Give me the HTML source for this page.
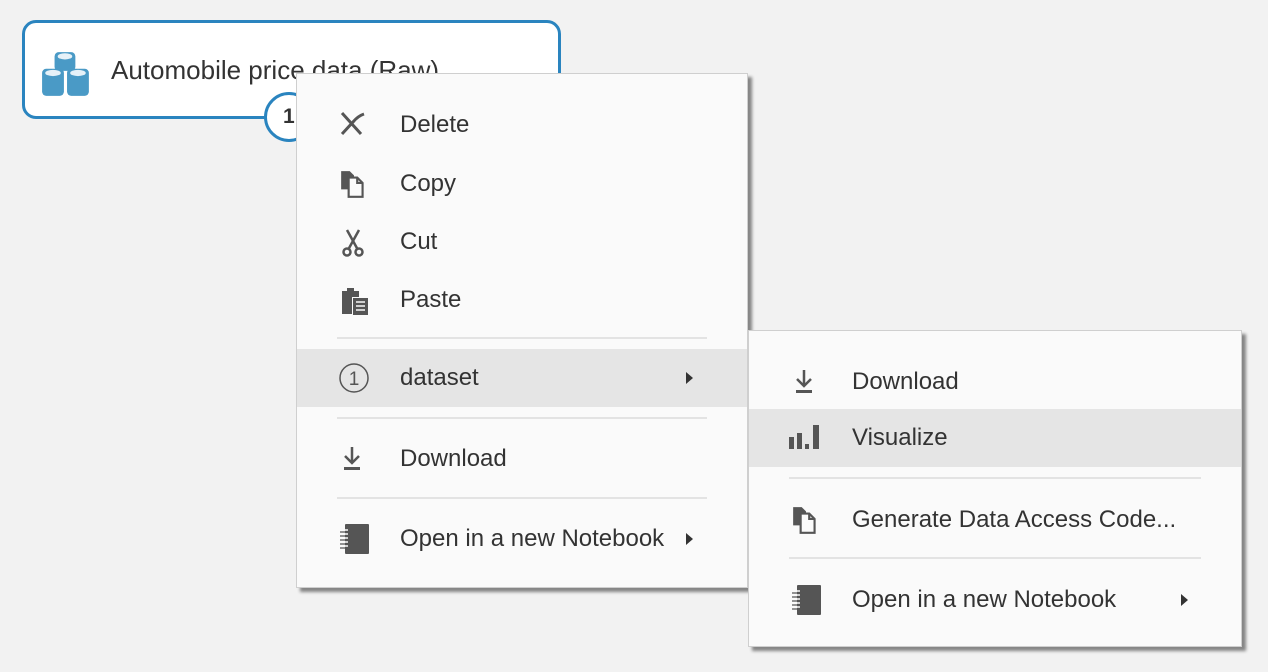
<!DOCTYPE html>
<html><head><style>
body{margin:0;width:1268px;height:672px;background:#f2f2f2;font-family:"Liberation Sans",sans-serif;position:relative;overflow:hidden;color:#333}
.node{position:absolute;left:22px;top:20px;width:533px;height:93px;border:3px solid #2a84bf;border-radius:14px;background:#fff}
.node .t{position:absolute;left:86px;top:32px;font-size:26px;color:#333}
.port{position:absolute;left:264px;top:92px;width:44px;height:44px;border:3px solid #2a84bf;border-radius:50%;background:#fff;font-weight:bold;font-size:21px;line-height:44px;text-indent:16px}
.menu{position:absolute;background:#fafafa;border:1px solid #cfcfcf;box-shadow:4px 4px 3px rgba(0,0,0,.45)}
.it{position:absolute;left:0;right:0;height:58px;font-size:24px;line-height:58px}
.it .tx{position:absolute}
.it svg{position:absolute;top:14px}
.hl{background:#e5e5e5}
.sep{position:absolute;height:2px;background:#e3e3e3}
.arr{position:absolute;width:0;height:0;border-left:7px solid #333;border-top:6px solid transparent;border-bottom:6px solid transparent;top:23px}
</style></head><body>
<div class="node">
<svg style="position:absolute;left:15px;top:24px" width="52" height="54" viewBox="0 0 50 48">
<g fill="#4a9ac6">
<rect x="14" y="3" width="20" height="18" rx="4"/>
<rect x="2" y="19" width="21" height="26" rx="4"/>
<rect x="26" y="19" width="21" height="26" rx="4"/>
</g>
<g fill="#e6f1f8"><ellipse cx="24" cy="7" rx="7" ry="3"/><ellipse cx="12.5" cy="23" rx="7.5" ry="3"/><ellipse cx="36.5" cy="23" rx="7.5" ry="3"/></g>
</svg>
<div class="t">Automobile price data (Raw)</div>
</div>
<div class="port">1</div>

<div class="menu" style="left:296px;top:73px;width:450px;height:513px">
<div class="it" style="top:22px"><svg style="left:42px" width="28" height="28" viewBox="0 0 28 28"><path d="M3 3 L22 24 M3 24 L14 12 Q19 6 25 4" stroke="#555" stroke-width="3" fill="none"/></svg><span class="tx" style="left:103px">Delete</span></div>
<div class="it" style="top:81px"><svg style="left:42px" width="30" height="30" viewBox="0 0 28 28"><path d="M2 2h8l4 4v13H2z" fill="#555"/><path d="M9 8h8l5 5v13H9z" fill="#fafafa" stroke="#555" stroke-width="2"/><path d="M17 8v5h5" fill="none" stroke="#555" stroke-width="2"/></svg><span class="tx" style="left:103px">Copy</span></div>
<div class="it" style="top:139px"><svg style="left:44px" width="28" height="32" viewBox="0 0 28 30"><path d="M6 2 L17 22 M18 2 L7 22" stroke="#555" stroke-width="2.5" fill="none"/><circle cx="6" cy="24" r="3.5" fill="none" stroke="#555" stroke-width="2.5"/><circle cx="18" cy="24" r="3.5" fill="none" stroke="#555" stroke-width="2.5"/></svg><span class="tx" style="left:103px">Cut</span></div>
<div class="it" style="top:197px"><svg style="left:43px" width="30" height="32" viewBox="0 0 30 30"><path d="M2 5h5V2h7v3h5v6H12v17H2z" fill="#555"/><rect x="13" y="12" width="15" height="17" fill="#555"/><path d="M16 16h9M16 20h9M16 24h9" stroke="#fafafa" stroke-width="1.5"/></svg><span class="tx" style="left:103px">Paste</span></div>
<div class="sep" style="left:40px;right:40px;top:263px"></div>
<div class="it hl" style="top:275px"><svg style="left:41px" width="34" height="34" viewBox="0 0 34 34"><circle cx="16" cy="15" r="14" fill="none" stroke="#555" stroke-width="1.5"/><text x="16" y="22" font-size="19" text-anchor="middle" fill="#555" font-family="Liberation Sans">1</text></svg><span class="tx" style="left:103px">dataset</span><div class="arr" style="left:389px"></div></div>
<div class="sep" style="left:40px;right:40px;top:343px"></div>
<div class="it" style="top:356px"><svg style="left:45px" width="24" height="28" viewBox="0 0 24 28"><path d="M10 3v15M3 12l7 7 7-7" stroke="#555" stroke-width="2.5" fill="none"/><rect x="2" y="23" width="16" height="3" fill="#555"/></svg><span class="tx" style="left:103px">Download</span></div>
<div class="sep" style="left:40px;right:40px;top:423px"></div>
<div class="it" style="top:436px"><svg style="left:42px" width="32" height="32" viewBox="0 0 32 32"><rect x="6" y="0" width="24" height="30" rx="1" fill="#555"/><path d="M1 6h8M1 10h8M1 14h8M1 18h8M1 22h8" stroke="#fafafa" stroke-width="1.5"/><path d="M1 6h6M1 10h6M1 14h6M1 18h6M1 22h6" stroke="#555" stroke-width="1.2" transform="translate(0,2)"/></svg><span class="tx" style="left:103px">Open in a new Notebook</span><div class="arr" style="left:389px"></div></div>
</div>

<div class="menu" style="left:748px;top:330px;width:492px;height:315px">
<div class="it" style="top:22px"><svg style="left:45px" width="24" height="28" viewBox="0 0 24 28"><path d="M10 3v15M3 12l7 7 7-7" stroke="#555" stroke-width="2.5" fill="none"/><rect x="2" y="23" width="16" height="3" fill="#555"/></svg><span class="tx" style="left:103px">Download</span></div>
<div class="it hl" style="top:78px"><svg style="left:40px" width="32" height="30" viewBox="0 0 32 30"><g fill="#555"><rect x="0" y="14" width="5" height="12"/><rect x="8" y="10" width="5" height="16"/><rect x="16" y="21" width="4" height="5"/><rect x="24" y="2" width="6" height="24"/></g></svg><span class="tx" style="left:103px">Visualize</span></div>
<div class="sep" style="left:40px;right:40px;top:146px"></div>
<div class="it" style="top:160px"><svg style="left:42px" width="30" height="30" viewBox="0 0 28 28"><path d="M2 2h8l4 4v13H2z" fill="#555"/><path d="M9 8h8l5 5v13H9z" fill="#fafafa" stroke="#555" stroke-width="2"/><path d="M17 8v5h5" fill="none" stroke="#555" stroke-width="2"/></svg><span class="tx" style="left:103px">Generate Data Access Code...</span></div>
<div class="sep" style="left:40px;right:40px;top:226px"></div>
<div class="it" style="top:240px"><svg style="left:42px" width="32" height="32" viewBox="0 0 32 32"><rect x="6" y="0" width="24" height="30" rx="1" fill="#555"/><path d="M1 6h8M1 10h8M1 14h8M1 18h8M1 22h8" stroke="#fafafa" stroke-width="1.5"/><path d="M1 6h6M1 10h6M1 14h6M1 18h6M1 22h6" stroke="#555" stroke-width="1.2" transform="translate(0,2)"/></svg><span class="tx" style="left:103px">Open in a new Notebook</span><div class="arr" style="left:432px"></div></div>
</div>
</body></html>
